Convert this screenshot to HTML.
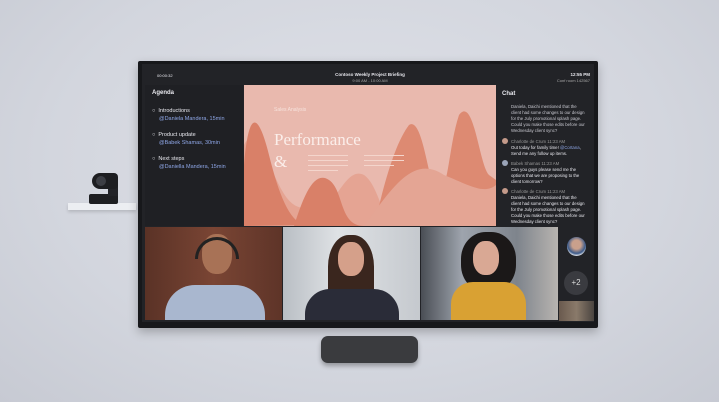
<!DOCTYPE html>
<html><head><style>
*{margin:0;padding:0;box-sizing:border-box}
body{width:719px;height:402px;overflow:hidden;background:radial-gradient(ellipse at 50% 40%,#dfe1e8 0%,#d3d6de 60%,#c7cad3 100%);font-family:"Liberation Sans",sans-serif;position:relative}
.a{position:absolute}
.t{color:#e8e8ee;white-space:nowrap}
</style></head><body>
<!-- shelf & camera -->
<div class="a" style="left:68px;top:203px;width:68px;height:7px;background:#eceef2;box-shadow:0 2px 3px rgba(0,0,0,.15)"></div>
<div class="a" style="left:89px;top:194px;width:29px;height:10px;background:#1e1f22;border-radius:2px"></div>
<div class="a" style="left:108px;top:180px;width:10px;height:16px;background:#222327"></div>
<div class="a" style="left:92px;top:173px;width:26px;height:16px;background:#1d1e21;border-radius:8px 4px 4px 8px"></div>
<div class="a" style="left:96px;top:176px;width:10px;height:10px;background:#3c3e44;border-radius:50%"></div>
<!-- tv -->
<div class="a" style="left:138px;top:61px;width:460px;height:267px;background:#17181b;border-radius:2px;box-shadow:0 4px 10px rgba(0,0,0,.25)"></div>
<div class="a" style="left:142px;top:64px;width:452px;height:258px;background:#222327"></div>
<!-- header -->
<div class="a t" style="left:157px;top:73px;font-size:4px">00:00:32</div>
<div class="a t" style="left:300px;top:72px;width:140px;text-align:center;font-size:4.5px;font-weight:bold">Contoso Weekly Project Briefing</div>
<div class="a t" style="left:300px;top:78px;width:140px;text-align:center;font-size:4px;color:#aaa">9:00 AM - 10:00 AM</div>
<div class="a t" style="left:540px;top:72px;width:50px;text-align:right;font-size:4.5px;font-weight:bold">12:55 PM</div>
<div class="a t" style="left:540px;top:78px;width:50px;text-align:right;font-size:4px;color:#aaa">Conf room 142567</div>
<!-- agenda -->
<div class="a" style="left:145px;top:85px;width:98px;height:141px;background:#1f2024"></div>
<div class="a t" style="left:152px;top:90px;font-size:6px;font-weight:bold">Agenda</div>
<div class="a t" style="left:152px;top:108px;font-size:5.5px;line-height:7.5px">○&nbsp; Introductions<br><span style="color:#8ea6e6;margin-left:7px">@Daniela Mandera, 15min</span></div>
<div class="a t" style="left:152px;top:132px;font-size:5.5px;line-height:7.5px">○&nbsp; Product update<br><span style="color:#8ea6e6;margin-left:7px">@Babek Shamas, 30min</span></div>
<div class="a t" style="left:152px;top:156px;font-size:5.5px;line-height:7.5px">○&nbsp; Next steps<br><span style="color:#8ea6e6;margin-left:7px">@Daniella Mandera, 15min</span></div>
<!-- slide -->
<svg class="a" style="left:244px;top:85px" width="252" height="141" viewBox="0 0 252 141">
<rect width="252" height="141" fill="#e9b9ae"/>
<path d="M0 141 L0 60 C10 40 20 70 35 100 C50 130 60 120 70 125 C90 130 100 80 120 90 C135 100 140 141 150 141 Z" fill="#e28f78" opacity=".5"/>
<path d="M0 141 L0 80 C5 20 15 30 25 70 C35 110 45 135 60 140 Z" fill="#d98068"/>
<path d="M50 141 C60 110 70 85 85 95 C100 105 95 141 120 141 Z" fill="#d98068"/>
<path d="M130 141 C140 100 150 60 165 40 C180 30 185 110 195 110 C205 100 205 60 215 30 C230 10 235 80 245 90 L252 95 L252 141 Z" fill="#dd8a72"/>
<path d="M120 141 C150 100 170 70 200 90 C225 100 240 110 252 100 L252 141 Z" fill="#e4a594"/>
<text x="30" y="26" font-size="5" fill="#f7e3dd" font-family="Liberation Sans">Sales Analysis</text>
<text x="30" y="60" font-size="17" fill="#fbeeea" font-family="Liberation Serif">Performance</text>
<text x="30" y="82" font-size="17" fill="#fbeeea" font-family="Liberation Serif">&amp;</text>
<g fill="#f4d5cc"><rect x="64" y="70" width="40" height="1"/><rect x="64" y="75" width="40" height="1"/><rect x="64" y="80" width="40" height="1"/><rect x="64" y="85" width="30" height="1"/><rect x="120" y="70" width="40" height="1"/><rect x="120" y="75" width="40" height="1"/><rect x="120" y="80" width="30" height="1"/></g>
</svg>
<!-- chat -->
<div class="a t" style="left:502px;top:91px;font-size:6px;font-weight:bold">Chat</div>
<div class="a t" style="left:511px;top:104px;font-size:4.3px;line-height:6px;color:#c8c8d0">Daniela, Daichi mentioned that the<br>client had some changes to our design<br>for the July promotional splash page.<br>Could you make those edits before our<br>Wednesday client sync?</div>
<div class="a" style="left:502px;top:138px;width:6px;height:6px;border-radius:50%;background:#c49a8a"></div>
<div class="a t" style="left:511px;top:139px;font-size:4.3px;line-height:6px"><span style="color:#999">Charlotte de Crum 11:23 AM</span><br>Out today for family time! <span style="color:#8ea6e6">@Cortana</span>,<br>Send me any follow up items.</div>
<div class="a" style="left:502px;top:160px;width:6px;height:6px;border-radius:50%;background:#9aa4b8"></div>
<div class="a t" style="left:511px;top:161px;font-size:4.3px;line-height:6px"><span style="color:#999">Babek Shamas 11:23 AM</span><br>Can you guys please send me the<br>options that we are proposing to the<br>client tomorrow?</div>
<div class="a" style="left:502px;top:188px;width:6px;height:6px;border-radius:50%;background:#c49a8a"></div>
<div class="a t" style="left:511px;top:189px;font-size:4.3px;line-height:6px"><span style="color:#999">Charlotte de Crum 11:23 AM</span><br>Daniela, Daichi mentioned that the<br>client had some changes to our design<br>for the July promotional splash page.<br>Could you make those edits before our<br>Wednesday client sync?</div>
<!-- videos -->
<div class="a" style="left:145px;top:227px;width:137px;height:93px;overflow:hidden;background:linear-gradient(90deg,#5a3226,#7a4534 50%,#5e3428)">
 <div class="a" style="left:20px;top:58px;width:100px;height:50px;background:#a9b7cf;border-radius:30px 30px 0 0"></div>
 <div class="a" style="left:57px;top:7px;width:30px;height:40px;background:#a87256;border-radius:45%"></div>
 <div class="a" style="left:50px;top:10px;width:44px;height:22px;border:3px solid #222;border-bottom:none;border-radius:22px 22px 0 0"></div>
</div>
<div class="a" style="left:283px;top:227px;width:137px;height:93px;overflow:hidden;background:linear-gradient(90deg,#b9bec4,#dfe2e5 40%,#c5c9ce)">
 <div class="a" style="left:45px;top:8px;width:46px;height:70px;background:#3a261e;border-radius:45% 45% 10% 10%"></div>
 <div class="a" style="left:22px;top:62px;width:94px;height:40px;background:#2a2c38;border-radius:25px 25px 0 0"></div>
 <div class="a" style="left:55px;top:15px;width:26px;height:34px;background:#d5a08a;border-radius:45%"></div>
</div>
<div class="a" style="left:421px;top:227px;width:137px;height:93px;overflow:hidden;background:linear-gradient(90deg,#4a4e55,#9ea4ad 30%,#7e848c 70%,#b8b4b0)">
 <div class="a" style="left:40px;top:5px;width:55px;height:60px;background:#1b1818;border-radius:45%"></div>
 <div class="a" style="left:30px;top:55px;width:75px;height:45px;background:#d9a133;border-radius:22px 22px 0 0"></div>
 <div class="a" style="left:52px;top:14px;width:26px;height:34px;background:#d9a894;border-radius:45%"></div>
</div>
<div class="a" style="left:567px;top:237px;width:19px;height:19px;border-radius:50%;background:radial-gradient(circle at 50% 40%,#c9a08c 30%,#3b5a8a 60%,#dfe3ea 75%)"></div>
<div class="a" style="left:564px;top:271px;width:24px;height:24px;border-radius:50%;background:#3a3b40;color:#ddd;font-size:8px;text-align:center;line-height:24px">+2</div>
<div class="a" style="left:559px;top:301px;width:35px;height:20px;background:linear-gradient(90deg,#6a5a4e,#8a7a6a,#4a4440)"></div>
<!-- speaker -->
<div class="a" style="left:321px;top:336px;width:97px;height:27px;background:#3a3b3e;border-radius:7px;box-shadow:0 3px 5px rgba(0,0,0,.3)"></div>
</body></html>
